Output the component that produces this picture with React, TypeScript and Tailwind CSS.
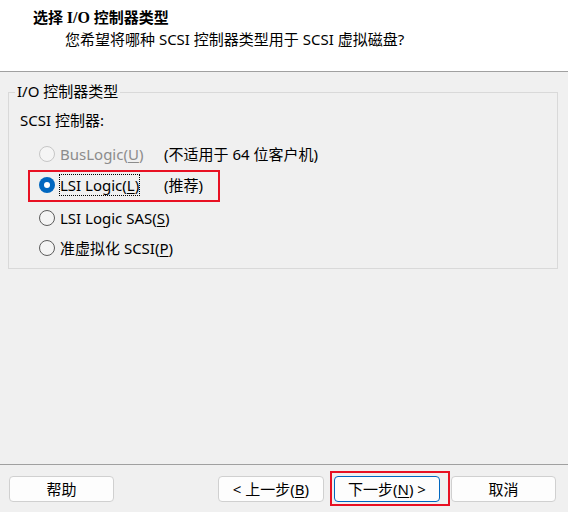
import React from "react";

const FONT = "'Noto Sans', 'Noto Sans CJK SC', sans-serif";

function Radio({ state }: { state: "on" | "off" | "disabled" }) {
  if (state === "on") {
    return (
      <span className="flex h-[16px] w-[16px] shrink-0 items-center justify-center rounded-full bg-[#0067c0]">
        <span className="h-[6px] w-[6px] rounded-full bg-white" />
      </span>
    );
  }
  if (state === "disabled") {
    return <span className="h-[16px] w-[16px] shrink-0 rounded-full border border-[#c6c6c6] bg-[#f5f5f5]" />;
  }
  return <span className="h-[16px] w-[16px] shrink-0 rounded-full border border-[#5c5c5c] bg-[#f4f4f4]" />;
}

function U({ children }: { children: React.ReactNode }) {
  return <span className="underline decoration-1 underline-offset-[2px]">{children}</span>;
}

export default function App() {
  return (
    <div
      className="flex h-[512px] w-[568px] flex-col overflow-hidden bg-[#f0f0f0] text-[15px] leading-[20px] text-black"
      style={{ fontFamily: FONT }}
    >
      {/* Header */}
      <div className="h-[72px] shrink-0 border-b border-[#a0a0a0] bg-white pt-[8px]">
        <div
          className="pl-[33px] font-bold"
          style={{ fontFamily: "'Liberation Serif', 'Noto Sans CJK SC', serif" }}
        >
          选择 <span className="text-[16px]">I/O</span> 控制器类型
        </div>
        <div className="mt-[1px] pl-[65px]">您希望将哪种 SCSI 控制器类型用于 SCSI 虚拟磁盘?</div>
      </div>

      {/* Group box */}
      <fieldset className="ml-[8px] mt-[9px] h-[188px] w-[550px] border border-[#d9d9d9] pl-[6px]">
        <legend className="px-[2px] pb-[3px] leading-[20px]">I/O 控制器类型</legend>
        <div className="pl-[5px]">
          <div className="mt-[6px] h-[20px]">SCSI 控制器:</div>

          <div className="mt-[14px] flex h-[20px] items-center pl-[19px]">
            <div className="flex w-[125px] items-center">
              <Radio state="disabled" />
              <span className="ml-[5px] text-[#8c8c8c]">
                BusLogic(<U>U</U>)
              </span>
            </div>
            <span>(不适用于 64 位客户机)</span>
          </div>

          <div className="relative mt-[11px] flex h-[20px] items-center pl-[19px]">
            <div className="flex w-[125px] items-center">
              <Radio state="on" />
              <span className="ml-[4px] border border-dotted border-black leading-[20px]">
                LSI Logic(<U>L</U>)
              </span>
            </div>
            <span>(推荐)</span>
            <span className="pointer-events-none absolute left-[8px] top-[-5px] h-[32px] w-[192px] border-2 border-[#e81123]" />
          </div>

          <div className="mt-[13px] flex h-[20px] items-center pl-[19px]">
            <Radio state="off" />
            <span className="ml-[5px]">
              LSI Logic SAS(<U>S</U>)
            </span>
          </div>

          <div className="mt-[10px] flex h-[20px] items-center pl-[19px]">
            <Radio state="off" />
            <span className="ml-[5px]">
              准虚拟化 SCSI(<U>P</U>)
            </span>
          </div>
        </div>
      </fieldset>

      <div className="flex-1" />

      {/* Footer */}
      <div className="h-[48px] shrink-0 border-t border-[#a0a0a0] pt-[11px]">
        <div className="flex items-start pl-[9px] pr-[12px]">
          <button className="flex h-[26px] w-[105px] items-center justify-center rounded-[4px] border border-[#d0d0d0] bg-[#fdfdfd]">
            帮助
          </button>
          <div className="ml-auto flex items-start">
            <button className="flex h-[26px] w-[106px] items-center justify-center rounded-[4px] border border-[#d0d0d0] bg-[#fdfdfd]">
              &lt; 上一步(<U>B</U>)
            </button>
            <div className="relative ml-[10px]">
              <button className="flex h-[26px] w-[106px] items-center justify-center rounded-[4px] border border-[#0067c0] bg-[#fdfdfd]">
                下一步(<U>N</U>) &gt;
              </button>
              <span className="pointer-events-none absolute left-[-4px] top-[-5px] h-[35px] w-[120px] border-2 border-[#e81123]" />
            </div>
            <button className="ml-[11px] flex h-[26px] w-[105px] items-center justify-center rounded-[4px] border border-[#d0d0d0] bg-[#fdfdfd]">
              取消
            </button>
          </div>
        </div>
      </div>
    </div>
  );
}
